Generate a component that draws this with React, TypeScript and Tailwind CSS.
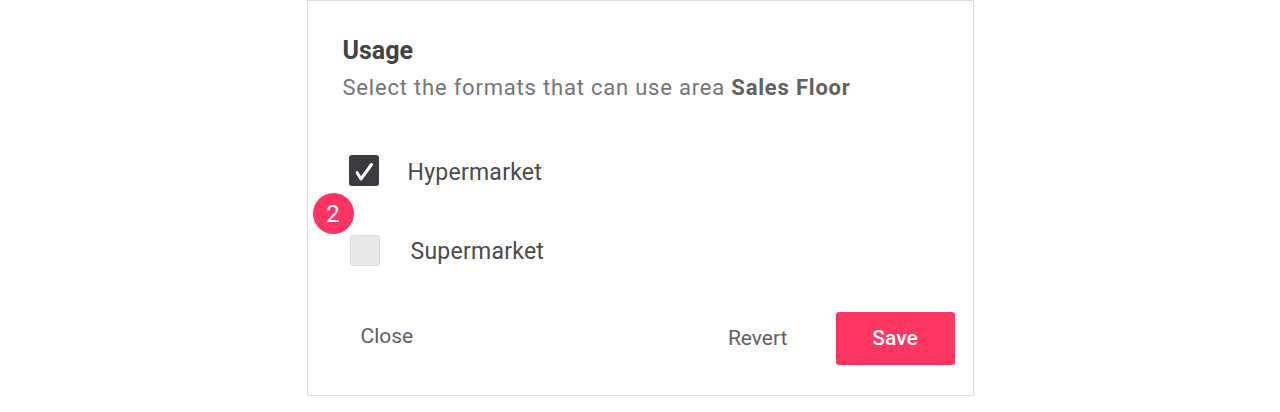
import { useState } from "react"

const font = { fontFamily: "Roboto, 'Liberation Sans', sans-serif" }

function CheckBox({ checked, onClick }: { checked: boolean; onClick: () => void }) {
  return (
    <button
      onClick={onClick}
      className={`relative w-[30px] h-[31px] rounded-[3px] shrink-0 ${
        checked ? "bg-[#3a3a40]" : "bg-[#e8e8e8] border border-[#dcdcdc]"
      }`}
    >
      {checked && (
        <svg className="absolute inset-0" width="30" height="31" viewBox="0 0 30 31" fill="none">
          <path d="M8 17.5 L12 24 L22.5 9.5" stroke="#fff" strokeWidth="3" strokeLinecap="round" strokeLinejoin="round" />
        </svg>
      )}
    </button>
  )
}

export default function App() {
  const [formats, setFormats] = useState({ hyper: true, super: false })

  return (
    <div className="w-[1280px] h-[412px] bg-white flex justify-center" style={font}>
      <div className="relative w-[667px] h-[396px] border border-[#dedede] bg-white flex flex-col">
        {/* Header */}
        <div className="pl-[35px] pt-[34px]">
          <h2 className="text-[25px] leading-[32px] font-bold text-[#424242]">Usage</h2>
          <p className="text-[22px] leading-[30px] tracking-[0.8px] text-[#757575] mt-[6px]">
            Select the formats that can use area <span className="font-bold text-[#616161]">Sales Floor</span>
          </p>
        </div>

        {/* Options */}
        <div className="flex flex-col pl-[41px] mt-[50px] gap-[46px]">
          <div className="flex items-center gap-[29px]">
            <CheckBox checked={formats.hyper} onClick={() => setFormats({ ...formats, hyper: !formats.hyper })} />
            <span className="relative top-[3px] text-[23px] tracking-[0.25px] text-[#4a4a4a]">Hypermarket</span>
          </div>
          <div className="flex items-center gap-[31px] pl-px">
            <CheckBox checked={formats.super} onClick={() => setFormats({ ...formats, super: !formats.super })} />
            <span className="relative top-[1px] text-[23px] tracking-[0.25px] text-[#4a4a4a]">Supermarket</span>
          </div>
        </div>

        {/* Step badge */}
        <div className="absolute left-[5px] top-[192px] w-[41px] h-[41px] rounded-full bg-[#ff3363] flex items-center justify-center text-white text-[24px]">
          2
        </div>

        {/* Footer */}
        <div className="mt-auto mb-[30px] flex items-center pl-[53px] pr-[18px]">
          <button className="text-[21px] text-[#616161] mt-[-4px]">Close</button>
          <button className="ml-auto text-[21px] text-[#616161]">Revert</button>
          <button className="ml-[48px] w-[119px] h-[53px] rounded-[3px] bg-[#ff3562] text-white text-[21px] font-medium">
            Save
          </button>
        </div>
      </div>
    </div>
  )
}
